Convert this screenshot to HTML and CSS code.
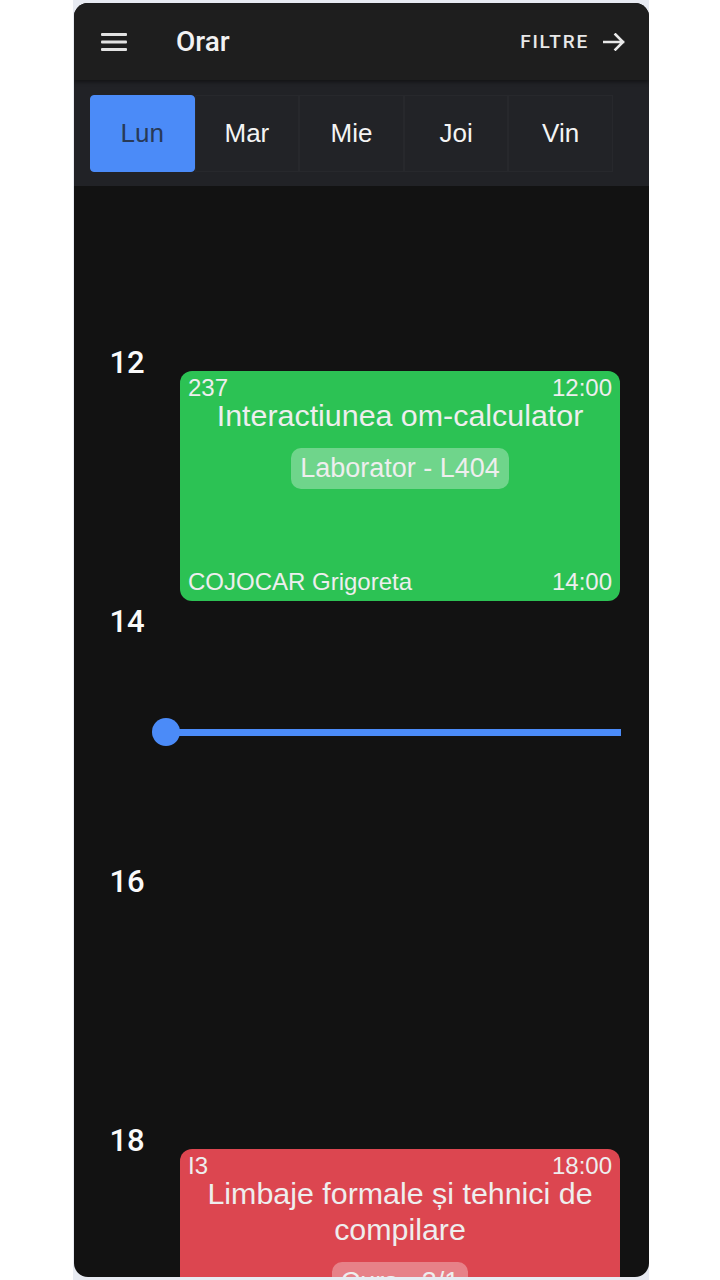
FILE: index.html
```html
<!DOCTYPE html>
<html lang="ro">
<head>
<meta charset="utf-8">
<title>Orar</title>
<link rel="stylesheet" href="styles.css">
</head>
<body>
<div class="device">
  <div class="phone">
    <header class="appbar">
      <button class="menu-btn" aria-label="Meniu">
        <svg width="26" height="18" viewBox="0 0 26 18"><rect x="0" y="0" width="26" height="3" rx="1"/><rect x="0" y="7.5" width="26" height="3" rx="1"/><rect x="0" y="15" width="26" height="3" rx="1"/></svg>
      </button>
      <h1 class="title">Orar</h1>
      <button class="filter-btn">FILTRE
        <svg width="22" height="18" viewBox="0 0 22 18"><path d="M1 9H20M12.5 1.5L20 9L12.5 16.5" fill="none" stroke="currentColor" stroke-width="2.6" stroke-linecap="square"/></svg>
      </button>
    </header>
    <nav class="days">
      <div class="day active">Lun</div>
      <div class="day">Mar</div>
      <div class="day">Mie</div>
      <div class="day">Joi</div>
      <div class="day">Vin</div>
    </nav>
    <main class="schedule">
      <div class="timeline">
        <div class="hours">
          <div class="hour"><span>12</span></div>
          <div class="hour"><span>14</span></div>
          <div class="hour"><span>16</span></div>
          <div class="hour"><span>18</span></div>
        </div>
        <div class="events">
          <article class="event green" style="top:185px;height:230px">
            <div class="event-row"><span>237</span><span>12:00</span></div>
            <div class="event-title">Interactiunea om-calculator</div>
            <div class="event-badge">Laborator - L404</div>
            <div class="event-row event-foot"><span>COJOCAR Grigoreta</span><span>14:00</span></div>
          </article>
          <article class="event red" style="top:963px;height:300px">
            <div class="event-row"><span>I3</span><span>18:00</span></div>
            <div class="event-title">Limbaje formale și tehnici de compilare</div>
            <div class="event-badge">Curs - 3/1</div>
          </article>
        </div>
        <div class="now" style="top:532px"><span class="now-dot"></span><span class="now-bar"></span></div>
      </div>
    </main>
  </div>
</div>
</body>
</html>
```
FILE: styles.css
```css
html, body {
  margin: 0;
  padding: 0;
  background: #ffffff;
}
.device {
  margin-left: 73px;
  width: 576px;
  height: 1280px;
  padding: 3px 0 0 1px;
  box-sizing: border-box;
  background: #e8ebf2;
}
.phone {
  width: 575px;
  height: 1274px;
  border-radius: 14px;
  overflow: hidden;
  background: #121212;
  display: flex;
  flex-direction: column;
  font-family: "Liberation Sans", Arial, sans-serif;
}
.appbar {
  height: 77px;
  flex: none;
  display: flex;
  align-items: center;
  padding: 0 24px 0 27px;
  background: #1e1e1e;
  box-shadow: 0 2px 4px rgba(0,0,0,0.45);
  position: relative;
  z-index: 2;
}
.menu-btn {
  background: none;
  border: 0;
  padding: 0;
  display: flex;
  fill: #e2e2e2;
}
.title {
  margin: 0 0 0 49px;
  font-family: Roboto, sans-serif;
  font-weight: 500;
  font-size: 28px;
  color: #f2f2f2;
  flex: 1;
}
.filter-btn {
  background: none;
  border: 0;
  padding: 0;
  display: flex;
  align-items: center;
  gap: 14px;
  font-family: Roboto, sans-serif;
  font-weight: 500;
  font-size: 19px;
  letter-spacing: 1.8px;
  color: #e8e8e8;
}
.days {
  flex: none;
  height: 106px;
  box-sizing: border-box;
  padding: 15px 16px 14px;
  display: flex;
  background: #212226;
}
.day {
  width: 104.6px;
  height: 77px;
  box-sizing: border-box;
  display: flex;
  align-items: center;
  justify-content: center;
  font-size: 26px;
  color: #f4f4f4;
  background: #222327;
  border: 1px solid #27282c;
}
.day.active {
  background: #4b8bf8;
  border-color: #4b8bf8;
  border-radius: 4px;
  color: #283a58;
}
.schedule {
  flex: 1;
  overflow: hidden;
}
.timeline {
  position: relative;
  height: 1400px;
}
.hours {
  width: 106px;
  padding-top: 161px;
}
.hour {
  height: 259.33px;
  text-align: center;
  font-family: Roboto, sans-serif;
  font-weight: 500;
  font-size: 31px;
  line-height: 31px;
  color: #fafafa;
}
.events {
  position: absolute;
  top: 0;
  bottom: 0;
  left: 106px;
  right: 29px;
}
.event {
  position: absolute;
  left: 0;
  right: 0;
  box-sizing: border-box;
  padding: 5px 8px 7px;
  border-radius: 12px;
  display: flex;
  flex-direction: column;
  color: #eeeeee;
  text-align: center;
}
.event.green { background: #2cc254; }
.event.red { background: #dc4650; }
.event-row {
  display: flex;
  justify-content: space-between;
  font-size: 24px;
  line-height: 24px;
}
.event-title {
  font-size: 30.4px;
  line-height: 36px;
  margin-top: -3px;
}
.event-badge {
  align-self: center;
  margin-top: 15px;
  font-size: 27px;
  line-height: 31px;
  padding: 5px 9px;
  border-radius: 10px;
  background: rgba(255,255,255,0.32);
}
.event-foot {
  margin-top: auto;
}
.now {
  position: absolute;
  left: 78px;
  right: 28px;
  display: flex;
  align-items: center;
}
.now-dot {
  width: 28px;
  height: 28px;
  border-radius: 50%;
  background: #4b8bf8;
  flex: none;
}
.now-bar {
  flex: 1;
  height: 7px;
  margin-left: -14px;
  background: #4b8bf8;
}
```
